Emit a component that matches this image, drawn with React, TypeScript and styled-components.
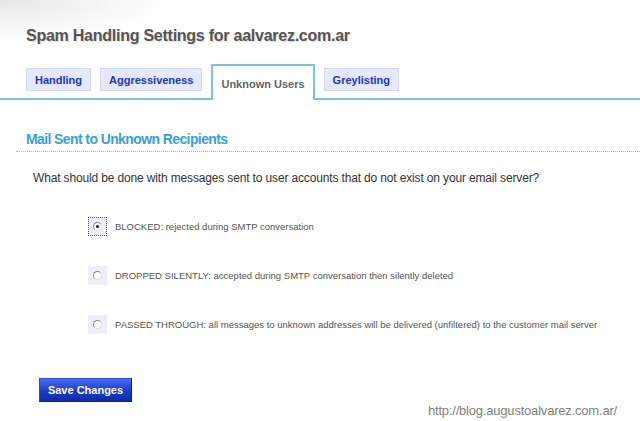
import styled, { createGlobalStyle } from 'styled-components'

const GlobalStyle = createGlobalStyle`
  html, body {
    margin: 0;
    padding: 0;
    background: #ffffff;
    font-family: "Liberation Sans", Arial, sans-serif;
  }
`

const Page = styled.div`
  position: relative;
  width: 640px;
  height: 421px;
  overflow: hidden;
  background: radial-gradient(ellipse 170px 42px at 0 0, #e6e6e6 0%, #f2f2f2 45%, rgba(255, 255, 255, 0) 100%),
    #ffffff;
`

const Title = styled.h1`
  margin: 0;
  padding: 27px 0 0 26px;
  font-size: 16px;
  font-weight: bold;
  color: #555;
  text-shadow: 1px 1px 1px rgba(0, 0, 0, 0.15);
  letter-spacing: -0.25px;
`

const TabBar = styled.div`
  display: flex;
  align-items: flex-end;
  gap: 9px;
  margin-top: 19px;
  padding-left: 26px;
  height: 34px;
  border-bottom: 2px solid #7cc4e6;
`

const Tab = styled.div<{ $active?: boolean }>`
  box-sizing: border-box;
  display: flex;
  align-items: center;
  justify-content: center;
  padding: 0 8px;
  font-size: 11px;
  font-weight: bold;
  ${p =>
    p.$active
      ? `
    height: 36px;
    margin-bottom: -2px;
    background: #fff;
    color: #666;
    border: 2px solid #7cc4e6;
    border-bottom: none;
    padding-top: 2px;
  `
      : `
    height: 23px;
    margin-bottom: 7px;
    background: #e5e9fb;
    color: #2334c8;
    border: 1px solid #d2d9f3;
  `}
`

const SectionTitle = styled.h2`
  margin: 0;
  padding: 31px 0 0 26px;
  font-size: 14px;
  font-weight: bold;
  color: #3a9fd8;
  letter-spacing: -0.6px;
`

const DottedRule = styled.div`
  margin: 4px 0 0 16px;
  border-bottom: 1px dotted #8cc6e6;
`

const Question = styled.p`
  margin: 19px 0 0 33px;
  font-size: 12px;
  color: #333;
  letter-spacing: -0.15px;
`

const Options = styled.div`
  display: flex;
  flex-direction: column;
  gap: 30px;
  margin: 32px 0 0 88px;
`

const Option = styled.label`
  display: flex;
  align-items: center;
  gap: 8px;
  font-size: 9.5px;
  color: #555;
`

const RadioBox = styled.span<{ $focused?: boolean }>`
  box-sizing: border-box;
  display: flex;
  align-items: center;
  justify-content: center;
  width: 19px;
  height: 19px;
  background: #eeeefb;
  border: 1px ${p => (p.$focused ? 'dotted #555' : 'solid transparent')};
`

const RadioDot = styled.span<{ $checked?: boolean }>`
  box-sizing: border-box;
  position: relative;
  width: 9px;
  height: 9px;
  border-radius: 50%;
  background: #fff;
  border: 1px solid #888;
  border-right-color: #ddd;
  border-bottom-color: #ddd;
  &::after {
    content: '';
    display: ${p => (p.$checked ? 'block' : 'none')};
    position: absolute;
    left: 2px;
    top: 2px;
    width: 3px;
    height: 3px;
    border-radius: 50%;
    background: #111;
  }
`

const SaveButton = styled.button`
  display: block;
  margin: 44px 0 0 39px;
  width: 93px;
  height: 24px;
  padding: 0;
  font-family: inherit;
  font-size: 11px;
  font-weight: bold;
  color: #fff;
  background: linear-gradient(#4a6cf0, #1a3cc8 55%, #0f2aa8);
  border: 1px solid #2b4ad8;
  border-right-color: #0c1f8a;
  border-bottom-color: #0c1f8a;
`

const Watermark = styled.div`
  position: absolute;
  right: 23px;
  bottom: 3px;
  font-size: 13px;
  color: #808080;
  letter-spacing: -0.2px;
`

const options = [
  { text: 'BLOCKED: rejected during SMTP conversation', checked: true },
  { text: 'DROPPED SILENTLY: accepted during SMTP conversation then silently deleted', checked: false },
  {
    text: 'PASSED THROUGH: all messages to unknown addresses will be delivered (unfiltered) to the customer mail server',
    checked: false,
  },
]

export default function App() {
  return (
    <Page>
      <GlobalStyle />
      <Title>Spam Handling Settings for aalvarez.com.ar</Title>
      <TabBar>
        <Tab>Handling</Tab>
        <Tab>Aggressiveness</Tab>
        <Tab $active>Unknown Users</Tab>
        <Tab>Greylisting</Tab>
      </TabBar>
      <SectionTitle>Mail Sent to Unknown Recipients</SectionTitle>
      <DottedRule />
      <Question>
        What should be done with messages sent to user accounts that do not exist on your email server?
      </Question>
      <Options>
        {options.map(o => (
          <Option key={o.text}>
            <RadioBox $focused={o.checked}>
              <RadioDot $checked={o.checked} />
            </RadioBox>
            {o.text}
          </Option>
        ))}
      </Options>
      <SaveButton>Save Changes</SaveButton>
      <Watermark>http://blog.augustoalvarez.com.ar/</Watermark>
    </Page>
  )
}
